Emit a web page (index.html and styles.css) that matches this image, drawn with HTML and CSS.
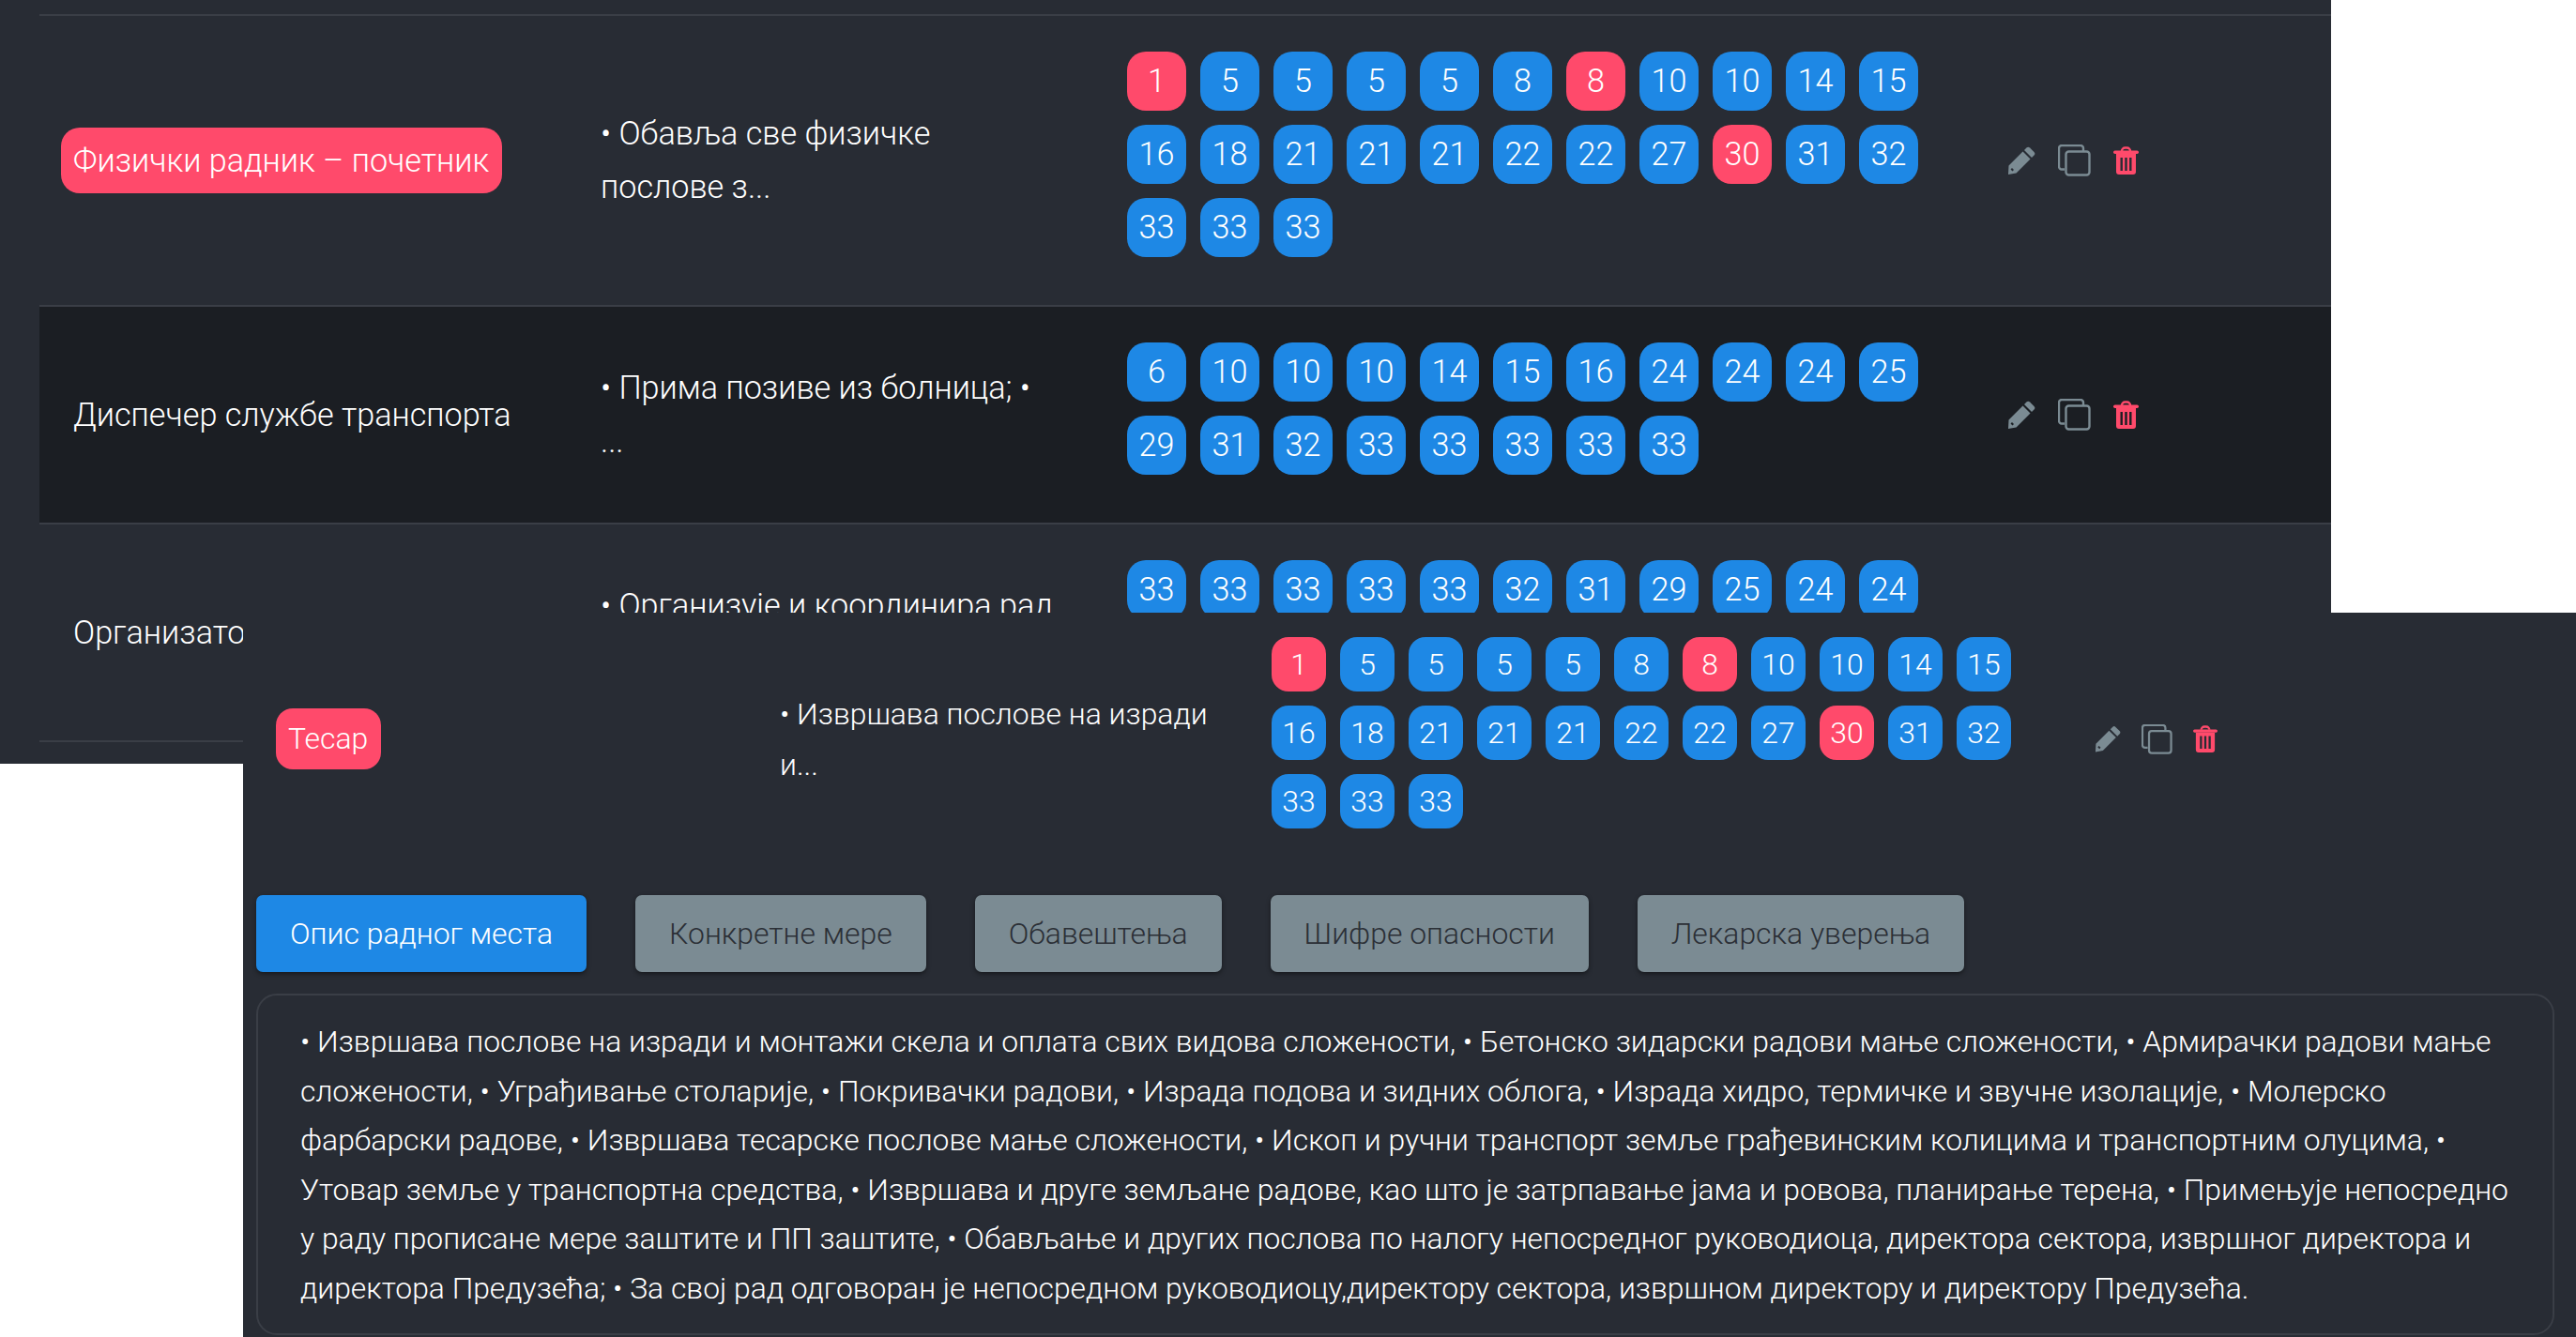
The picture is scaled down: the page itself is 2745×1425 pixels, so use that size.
FILE: index.html
```html
<!DOCTYPE html>
<html lang="sr">

<head>
    <meta charset="UTF-8">
    <title>Радна места</title>
    <link rel="stylesheet" href="styles.css">
</head>

<body>
    <svg class="icon-defs" aria-hidden="true">
        <symbol id="i-pencil" viewBox="0 0 30 30">
            <path d="M20.5 1.5a2.5 2.5 0 0 1 3.500 0l4.500 4.500a2.500 2.500 0 0 1 0 3.500L26 12l-8-8z" />
            <path fill-rule="evenodd" d="M16.500 5.500l8 8L9.500 28.500 1 30l.5-9.500zM5 23l-1.500 1.500 2 2L7 25z" />
        </symbol>
        <symbol id="i-copy" viewBox="0 0 35 34">
            <path fill="none" stroke="currentColor" stroke-width="2.400" d="M7 26.500H4a3 3 0 0 1-3-3V4a3 3 0 0 1 3-3h20a3 3 0 0 1 3 3v3" />
            <rect x="8.500" y="7.500" width="25" height="25" rx="3" fill="none" stroke="currentColor" stroke-width="2.400" />
        </symbol>
        <symbol id="i-trash" viewBox="0 0 27 30">
            <path fill="none" stroke="currentColor" stroke-width="2.400" d="M9 5a3.500 3.500 0 0 1 3.500-3.500h2A3.500 3.500 0 0 1 18 5" />
            <rect x="0" y="4.500" width="27" height="3.500" rx="1.700" />
            <path fill-rule="evenodd" d="M3 8h21v19a3 3 0 0 1-3 3H6a3 3 0 0 1-3-3zM7.500 12v14h2.400V12zM12.300 12v14h2.400V12zM17.100 12v14h2.400V12z" />
        </symbol>
    </svg>

    <!-- горњи прозор -->
    <section class="window window-top">
        <div class="row">
            <div class="name"><span class="tag">Физички радник – почетник</span></div>
            <div class="desc">• Обавља све физичке послове з...</div>
            <div class="pills">
                <span class="pill red">1</span><span class="pill">5</span><span class="pill">5</span><span class="pill">5</span><span class="pill">5</span><span class="pill">8</span><span class="pill red">8</span><span class="pill">10</span><span class="pill">10</span><span class="pill">14</span><span class="pill">15</span>
                <span class="pill">16</span><span class="pill">18</span><span class="pill">21</span><span class="pill">21</span><span class="pill">21</span><span class="pill">22</span><span class="pill">22</span><span class="pill">27</span><span class="pill red">30</span><span class="pill">31</span><span class="pill">32</span>
                <span class="pill">33</span><span class="pill">33</span><span class="pill">33</span>
            </div>
            <div class="actions">
                <svg class="ic ic-pencil"><use href="#i-pencil" /></svg>
                <svg class="ic ic-copy"><use href="#i-copy" /></svg>
                <svg class="ic ic-trash"><use href="#i-trash" /></svg>
            </div>
        </div>
        <div class="row dark">
            <div class="name">Диспечер службе транспорта</div>
            <div class="desc">• Прима позиве из болница; • ...</div>
            <div class="pills">
                <span class="pill">6</span><span class="pill">10</span><span class="pill">10</span><span class="pill">10</span><span class="pill">14</span><span class="pill">15</span><span class="pill">16</span><span class="pill">24</span><span class="pill">24</span><span class="pill">24</span><span class="pill">25</span>
                <span class="pill">29</span><span class="pill">31</span><span class="pill">32</span><span class="pill">33</span><span class="pill">33</span><span class="pill">33</span><span class="pill">33</span><span class="pill">33</span>
            </div>
            <div class="actions">
                <svg class="ic ic-pencil"><use href="#i-pencil" /></svg>
                <svg class="ic ic-copy"><use href="#i-copy" /></svg>
                <svg class="ic ic-trash"><use href="#i-trash" /></svg>
            </div>
        </div>
        <div class="row">
            <div class="name">Организатор</div>
            <div class="desc">• Организује и координира рад возача...</div>
            <div class="pills">
                <span class="pill">33</span><span class="pill">33</span><span class="pill">33</span><span class="pill">33</span><span class="pill">33</span><span class="pill">32</span><span class="pill">31</span><span class="pill">29</span><span class="pill">25</span><span class="pill">24</span><span class="pill">24</span>
                <span class="pill">24</span>
            </div>
            <div class="actions"></div>
        </div>
    </section>

    <!-- доњи прозор -->
    <section class="window window-bottom">
        <div class="row">
            <div class="name"><span class="tag">Тесар</span></div>
            <div class="desc">• Извршава послове на изради и...</div>
            <div class="pills">
                <span class="pill red">1</span><span class="pill">5</span><span class="pill">5</span><span class="pill">5</span><span class="pill">5</span><span class="pill">8</span><span class="pill red">8</span><span class="pill">10</span><span class="pill">10</span><span class="pill">14</span><span class="pill">15</span>
                <span class="pill">16</span><span class="pill">18</span><span class="pill">21</span><span class="pill">21</span><span class="pill">21</span><span class="pill">22</span><span class="pill">22</span><span class="pill">27</span><span class="pill red">30</span><span class="pill">31</span><span class="pill">32</span>
                <span class="pill">33</span><span class="pill">33</span><span class="pill">33</span>
            </div>
            <div class="actions">
                <svg class="ic ic-pencil"><use href="#i-pencil" /></svg>
                <svg class="ic ic-copy"><use href="#i-copy" /></svg>
                <svg class="ic ic-trash"><use href="#i-trash" /></svg>
            </div>
        </div>

        <div class="tabs">
            <button class="tab active">Опис радног места</button>
            <button class="tab">Конкретне мере</button>
            <button class="tab">Обавештења</button>
            <button class="tab">Шифре опасности</button>
            <button class="tab">Лекарска уверења</button>
        </div>

        <div class="panel">• Извршава послове на изради и монтажи скела и оплата свих видова сложености, • Бетонско зидарски радови мање сложености, • Армирачки радови мање сложености, • Уграђивање столарије, • Покривачки радови, • Израда подова и зидних облога, • Израда хидро, термичке и звучне изолације, • Молерско фарбарски радове, • Извршава тесарске послове мање сложености, • Ископ и ручни транспорт земље грађевинским колицима и транспортним олуцима, • Утовар земље у транспортна средства, • Извршава и друге земљане радове, као што је затрпавање јама и ровова, планирање терена, • Примењује непосредно у раду прописане мере заштите и ПП заштите, • Обављање и других послова по налогу непосредног руководиоца, директора сектора, извршног директора и директора Предузећа; • За свој рад одговоран је непосредном руководиоцу,директору сектора, извршном директору и директору Предузећа.</div>
    </section>
</body>

</html>
```
FILE: styles.css
```css
html,
body {
    margin: 0;
    height: 100%;
    overflow: hidden;
    background-color: #fff;
}

body {
    position: relative;
    font-family: Roboto, "Noto Sans", sans-serif;
    font-weight: 300;
    color: #fff;
}

.icon-defs {
    display: none;
}

/* два прозора преко белог платна */
.window {
    position: absolute;
    background-color: #282c34;
    overflow: hidden;
    box-sizing: border-box;
}

.window-top {
    left: 0;
    top: 0;
    width: 2484px;
    height: 814px;
    padding: 15px 0 0 42px;
    font-size: 34.200px;
}

.window-bottom {
    left: 259px;
    top: 653px;
    width: 2486px;
    height: 772px;
    padding: 0 23px 0 14px;
    font-size: 31.900px;
}

.row {
    display: grid;
    align-items: center;
    border-top: 2px solid #3a3e46;
}

.window-top .row {
    grid-template-columns: 598px 561px 938px 1fr;
    padding: 37px 0;
}

.row.dark {
    background-color: #1b1e23;
}

.window-top .row:last-child {
    border-bottom: 2px solid #3a3e46;
}

.window-bottom .row {
    grid-template-columns: 558px 524px 877px 1fr;
    padding: 26px 0 58px 0;
    border-top: none;
}

.window-top .name {
    padding-left: 36px;
}

.window-bottom .name {
    padding-left: 21px;
}

.tag {
    display: inline-block;
    padding: 0 14px 0 13px;
    line-height: 70px;
    border-radius: 20px;
    background-color: #ff4a6b;
}

.window-top .tag {
    margin-left: -13px;
}

.window-bottom .tag {
    line-height: 65px;
    border-radius: 18px;
}

.desc {
    width: 488px;
    line-height: 57px;
}

.window-bottom .desc {
    width: 470px;
    line-height: 54px;
}

.pills {
    display: flex;
    flex-wrap: wrap;
    gap: 15px;
    width: 843px;
    padding: 1px 0 14px;
}

.window-bottom .pills {
    width: 788px;
    padding: 0 0 13px;
}

.pill {
    display: block;
    text-align: center;
    width: 63px;
    height: 63px;
    line-height: 63px;
    border-radius: 20px;
    background-color: #1e88e5;
}

.window-bottom .pill {
    width: 58px;
    height: 58px;
    line-height: 58px;
    border-radius: 18px;
}

.pill.red {
    background-color: #ff4a6b;
}

.actions {
    display: flex;
    align-items: center;
    gap: 24px;
    color: #7b8b93;
    fill: currentColor;
}

.window-bottom .actions {
    gap: 22px;
}

.ic {
    display: block;
    flex: none;
}

.ic-pencil {
    width: 30px;
    height: 30px;
}

.ic-copy {
    width: 35px;
    height: 34px;
}

.ic-trash {
    width: 27px;
    height: 30px;
    color: #ff4a6b;
}

.window-bottom .ic-pencil {
    width: 28px;
    height: 29px;
}

.window-bottom .ic-copy {
    width: 33px;
    height: 32px;
}

.window-bottom .ic-trash {
    width: 26px;
    height: 29px;
}

.tabs {
    display: flex;
    gap: 52px;
    margin-bottom: 23px;
}

.tab {
    height: 82px;
    padding: 0 36px;
    border: none;
    border-radius: 7px;
    font: inherit;
    color: #2b2f36;
    background-color: #7b8b93;
    box-shadow: 0 2px 5px rgba(0, 0, 0, 0.45);
}

.tab.active {
    color: #fff;
    background-color: #1e88e5;
}

.panel {
    padding: 23px 28px 21px 45px;
    border: 2px solid #3a3e46;
    border-radius: 22px;
    font-size: 31.850px;
    line-height: 52.600px;
}
```
